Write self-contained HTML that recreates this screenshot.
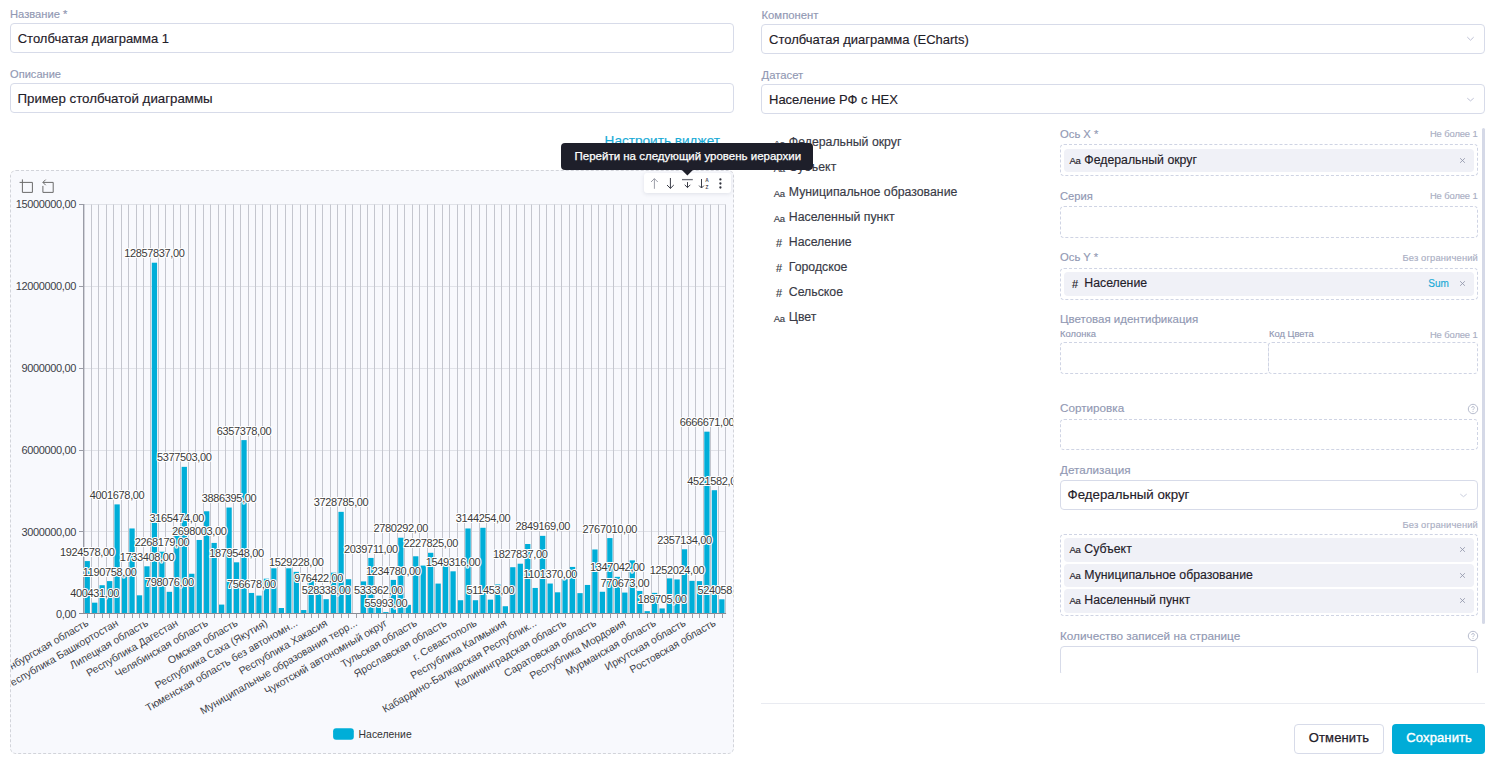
<!DOCTYPE html>
<html><head><meta charset="utf-8"><title>Widget editor</title>
<style>
html,body{margin:0;padding:0;background:#ffffff;width:1488px;height:757px;overflow:hidden;position:relative;font-family:"Liberation Sans", sans-serif;}
.t{position:absolute;white-space:nowrap;-webkit-text-stroke:0.15px currentColor;}
</style></head><body>
<div class="t" style="left:10.00px;top:9.00px;font-size:11.2px;line-height:11.2px;color:#9198b3;font-weight:400;">Название *</div>
<div style="position:absolute;left:10.00px;top:23.00px;width:724.00px;height:30.00px;box-sizing:border-box;border:1px solid #d7dbe9;border-radius:4px;background:#fff"></div>
<div class="t" style="left:17.70px;top:32.00px;font-size:13px;line-height:13px;color:#1f2029;font-weight:400;">Столбчатая диаграмма 1</div>
<div class="t" style="left:10.00px;top:69.00px;font-size:11.1px;line-height:11.1px;color:#9198b3;font-weight:400;">Описание</div>
<div style="position:absolute;left:10.00px;top:83.00px;width:724.00px;height:30.00px;box-sizing:border-box;border:1px solid #d7dbe9;border-radius:4px;background:#fff"></div>
<div class="t" style="left:17.50px;top:92.00px;font-size:13.3px;line-height:13.3px;color:#1f2029;font-weight:400;">Пример столбчатой диаграммы</div>
<div class="t" style="left:761.50px;top:10.00px;font-size:11.3px;line-height:11.3px;color:#9198b3;font-weight:400;">Компонент</div>
<div style="position:absolute;left:761.00px;top:24.00px;width:724.00px;height:30.00px;box-sizing:border-box;border:1px solid #d7dbe9;border-radius:4px;background:#fff"></div>
<div class="t" style="left:769.00px;top:33.00px;font-size:13px;line-height:13px;color:#1f2029;font-weight:400;">Столбчатая диаграмма (ECharts)</div>
<svg style="position:absolute;left:1465px;top:34px" width="11" height="9" viewBox="0 0 11 9"><path d="M2.30 3.10 L5.50 6.20 L8.70 3.10" fill="none" stroke="#b9bdd2" stroke-width="0.95"/></svg>
<div class="t" style="left:761.50px;top:70.00px;font-size:11.3px;line-height:11.3px;color:#9198b3;font-weight:400;">Датасет</div>
<div style="position:absolute;left:761.00px;top:84.00px;width:724.00px;height:30.00px;box-sizing:border-box;border:1px solid #d7dbe9;border-radius:4px;background:#fff"></div>
<div class="t" style="left:769.00px;top:93.00px;font-size:13px;line-height:13px;color:#1f2029;font-weight:400;">Население РФ с HEX</div>
<svg style="position:absolute;left:1465px;top:94px" width="11" height="9" viewBox="0 0 11 9"><path d="M2.30 4.20 L5.50 6.90 L8.70 4.20" fill="none" stroke="#b9bdd2" stroke-width="0.95"/></svg>
<div class="t" style="left:773.80px;top:139.00px;font-size:9.5px;line-height:9.5px;color:#3a3c48;font-weight:400;letter-spacing:-0.4px;">Aa</div>
<div class="t" style="left:788.80px;top:136.00px;font-size:12.3px;line-height:12.3px;color:#383a46;font-weight:400;">Федеральный округ</div>
<div class="t" style="left:773.80px;top:164.00px;font-size:9.5px;line-height:9.5px;color:#3a3c48;font-weight:400;letter-spacing:-0.4px;">Aa</div>
<div class="t" style="left:788.80px;top:161.00px;font-size:12.3px;line-height:12.3px;color:#383a46;font-weight:400;">Субъект</div>
<div class="t" style="left:773.80px;top:189.00px;font-size:9.5px;line-height:9.5px;color:#3a3c48;font-weight:400;letter-spacing:-0.4px;">Aa</div>
<div class="t" style="left:788.80px;top:186.00px;font-size:12.3px;line-height:12.3px;color:#383a46;font-weight:400;">Муниципальное образование</div>
<div class="t" style="left:773.80px;top:214.00px;font-size:9.5px;line-height:9.5px;color:#3a3c48;font-weight:400;letter-spacing:-0.4px;">Aa</div>
<div class="t" style="left:788.80px;top:211.00px;font-size:12.3px;line-height:12.3px;color:#383a46;font-weight:400;">Населенный пункт</div>
<div class="t" style="left:776.00px;top:238.00px;font-size:11px;line-height:11px;color:#3a3c48;font-weight:400;">#</div>
<div class="t" style="left:788.80px;top:236.00px;font-size:12.3px;line-height:12.3px;color:#383a46;font-weight:400;">Население</div>
<div class="t" style="left:776.00px;top:263.00px;font-size:11px;line-height:11px;color:#3a3c48;font-weight:400;">#</div>
<div class="t" style="left:788.80px;top:261.00px;font-size:12.3px;line-height:12.3px;color:#383a46;font-weight:400;">Городское</div>
<div class="t" style="left:776.00px;top:288.00px;font-size:11px;line-height:11px;color:#3a3c48;font-weight:400;">#</div>
<div class="t" style="left:788.80px;top:286.00px;font-size:12.3px;line-height:12.3px;color:#383a46;font-weight:400;">Сельское</div>
<div class="t" style="left:773.80px;top:314.00px;font-size:9.5px;line-height:9.5px;color:#3a3c48;font-weight:400;letter-spacing:-0.4px;">Aa</div>
<div class="t" style="left:788.80px;top:311.00px;font-size:12.3px;line-height:12.3px;color:#383a46;font-weight:400;">Цвет</div>
<div class="t" style="left:1060.00px;top:129.00px;font-size:11.25px;line-height:11.25px;color:#9198b3;font-weight:400;">Ось X *</div>
<div class="t" style="right:10.40px;top:129.00px;font-size:9.4px;line-height:9.4px;color:#a9aec3;font-weight:400;letter-spacing:-0.1px;">Не более 1</div>
<div style="position:absolute;left:1060.00px;top:144.00px;width:418.00px;height:32.00px;box-sizing:border-box;border:1px dashed #cfd4e4;border-radius:4px"></div>
<div style="position:absolute;left:1064.00px;top:149.00px;width:410.00px;height:23.00px;box-sizing:border-box;background:#f0f1f7;border-radius:4px"></div>
<div class="t" style="left:1069.60px;top:156.00px;font-size:9.5px;line-height:9.5px;color:#1f2029;font-weight:400;letter-spacing:-0.4px;">Aa</div>
<div class="t" style="left:1084.30px;top:154.00px;font-size:12.3px;line-height:12.3px;color:#1f2029;font-weight:400;">Федеральный округ</div>
<svg style="position:absolute;left:1458px;top:156px" width="9" height="9" viewBox="0 0 9 9"><path d="M2.10 2.20 L6.90 6.80 M6.90 2.20 L2.10 6.80" fill="none" stroke="#9297ab" stroke-width="0.85"/></svg>
<div class="t" style="left:1060.00px;top:191.00px;font-size:11.2px;line-height:11.2px;color:#9198b3;font-weight:400;">Серия</div>
<div class="t" style="right:10.40px;top:191.00px;font-size:9.4px;line-height:9.4px;color:#a9aec3;font-weight:400;letter-spacing:-0.1px;">Не более 1</div>
<div style="position:absolute;left:1060.00px;top:206.00px;width:418.00px;height:32.00px;box-sizing:border-box;border:1px dashed #cfd4e4;border-radius:4px"></div>
<div class="t" style="left:1060.00px;top:252.00px;font-size:11.25px;line-height:11.25px;color:#9198b3;font-weight:400;">Ось Y *</div>
<div class="t" style="right:10.00px;top:253.00px;font-size:9.4px;line-height:9.4px;color:#a9aec3;font-weight:400;letter-spacing:0.15px;">Без ограничений</div>
<div style="position:absolute;left:1060.00px;top:268.00px;width:418.00px;height:32.00px;box-sizing:border-box;border:1px dashed #cfd4e4;border-radius:4px"></div>
<div style="position:absolute;left:1064.00px;top:272.00px;width:410.00px;height:24.00px;box-sizing:border-box;background:#f0f1f7;border-radius:4px"></div>
<div class="t" style="left:1072.00px;top:279.00px;font-size:11px;line-height:11px;color:#1f2029;font-weight:400;">#</div>
<div class="t" style="left:1084.30px;top:277.00px;font-size:12.3px;line-height:12.3px;color:#1f2029;font-weight:400;">Население</div>
<div class="t" style="left:1428.30px;top:279.00px;font-size:10px;line-height:10px;color:#19aad6;font-weight:400;">Sum</div>
<svg style="position:absolute;left:1458px;top:279px" width="9" height="9" viewBox="0 0 9 9"><path d="M2.10 2.20 L6.90 6.80 M6.90 2.20 L2.10 6.80" fill="none" stroke="#9297ab" stroke-width="0.85"/></svg>
<div class="t" style="left:1060.00px;top:314.00px;font-size:11.5px;line-height:11.5px;color:#9198b3;font-weight:400;">Цветовая идентификация</div>
<div class="t" style="left:1060.00px;top:329.00px;font-size:9.4px;line-height:9.4px;color:#9198b3;font-weight:400;">Колонка</div>
<div class="t" style="left:1269.00px;top:329.00px;font-size:9.4px;line-height:9.4px;color:#9198b3;font-weight:400;">Код Цвета</div>
<div class="t" style="right:10.40px;top:330.00px;font-size:9.4px;line-height:9.4px;color:#a9aec3;font-weight:400;letter-spacing:-0.1px;">Не более 1</div>
<div style="position:absolute;left:1060.00px;top:342.00px;width:209.00px;height:32.00px;box-sizing:border-box;border:1px dashed #cfd4e4;border-radius:4px"></div>
<div style="position:absolute;left:1268.00px;top:342.00px;width:210.00px;height:32.00px;box-sizing:border-box;border:1px dashed #cfd4e4;border-radius:4px"></div>
<div class="t" style="left:1060.00px;top:402.00px;font-size:11.7px;line-height:11.7px;color:#9198b3;font-weight:400;">Сортировка</div>
<svg style="position:absolute;left:1466.80px;top:403.00px" width="12" height="12" viewBox="0 0 12 12"><circle cx="6" cy="6" r="4.7" fill="none" stroke="#b7bccd" stroke-width="1"/><path d="M4.6 4.9 C4.6 4.0 5.2 3.5 6 3.5 C6.8 3.5 7.4 4.0 7.4 4.8 C7.4 5.5 6.9 5.8 6.5 6.1 C6.1 6.4 6 6.7 6 7.1" fill="none" stroke="#b7bccd" stroke-width="0.9"/><circle cx="6" cy="8.5" r="0.55" fill="#b7bccd"/></svg>
<div style="position:absolute;left:1060.00px;top:419.00px;width:418.00px;height:31.00px;box-sizing:border-box;border:1px dashed #cfd4e4;border-radius:4px"></div>
<div class="t" style="left:1060.00px;top:464.00px;font-size:11.7px;line-height:11.7px;color:#9198b3;font-weight:400;">Детализация</div>
<div style="position:absolute;left:1060.00px;top:480.00px;width:418.00px;height:30.00px;box-sizing:border-box;border:1px solid #d7dbe9;border-radius:4px;background:#fff"></div>
<div class="t" style="left:1067.60px;top:488.00px;font-size:13.3px;line-height:13.3px;color:#1f2029;font-weight:400;">Федеральный округ</div>
<svg style="position:absolute;left:1458px;top:490px" width="11" height="9" viewBox="0 0 11 9"><path d="M2.30 4.10 L5.50 6.70 L8.70 4.10" fill="none" stroke="#c6cadb" stroke-width="0.95"/></svg>
<div class="t" style="right:10.00px;top:520.00px;font-size:9.4px;line-height:9.4px;color:#a9aec3;font-weight:400;letter-spacing:0.15px;">Без ограничений</div>
<div style="position:absolute;left:1060.00px;top:534.00px;width:418.00px;height:82.00px;box-sizing:border-box;border:1px dashed #cfd4e4;border-radius:4px"></div>
<div style="position:absolute;left:1064.00px;top:538.00px;width:410.00px;height:23.50px;box-sizing:border-box;background:#f0f1f7;border-radius:4px"></div>
<div class="t" style="left:1069.60px;top:545.00px;font-size:9.5px;line-height:9.5px;color:#1f2029;font-weight:400;letter-spacing:-0.4px;">Aa</div>
<div class="t" style="left:1084.30px;top:543.00px;font-size:12.3px;line-height:12.3px;color:#1f2029;font-weight:400;">Субъект</div>
<svg style="position:absolute;left:1458px;top:545px" width="9" height="9" viewBox="0 0 9 9"><path d="M2.10 2.20 L6.90 6.80 M6.90 2.20 L2.10 6.80" fill="none" stroke="#9297ab" stroke-width="0.85"/></svg>
<div style="position:absolute;left:1064.00px;top:563.60px;width:410.00px;height:23.50px;box-sizing:border-box;background:#f0f1f7;border-radius:4px"></div>
<div class="t" style="left:1069.60px;top:571.00px;font-size:9.5px;line-height:9.5px;color:#1f2029;font-weight:400;letter-spacing:-0.4px;">Aa</div>
<div class="t" style="left:1084.30px;top:569.00px;font-size:12.3px;line-height:12.3px;color:#1f2029;font-weight:400;">Муниципальное образование</div>
<svg style="position:absolute;left:1458px;top:571px" width="9" height="9" viewBox="0 0 9 9"><path d="M2.10 2.20 L6.90 6.80 M6.90 2.20 L2.10 6.80" fill="none" stroke="#9297ab" stroke-width="0.85"/></svg>
<div style="position:absolute;left:1064.00px;top:589.20px;width:410.00px;height:23.50px;box-sizing:border-box;background:#f0f1f7;border-radius:4px"></div>
<div class="t" style="left:1069.60px;top:596.00px;font-size:9.5px;line-height:9.5px;color:#1f2029;font-weight:400;letter-spacing:-0.4px;">Aa</div>
<div class="t" style="left:1084.30px;top:594.00px;font-size:12.3px;line-height:12.3px;color:#1f2029;font-weight:400;">Населенный пункт</div>
<svg style="position:absolute;left:1458px;top:596px" width="9" height="9" viewBox="0 0 9 9"><path d="M2.10 2.20 L6.90 6.80 M6.90 2.20 L2.10 6.80" fill="none" stroke="#9297ab" stroke-width="0.85"/></svg>
<div class="t" style="left:1060.00px;top:630.00px;font-size:11.75px;line-height:11.75px;color:#9198b3;font-weight:400;">Количество записей на странице</div>
<svg style="position:absolute;left:1467.00px;top:629.80px" width="12" height="12" viewBox="0 0 12 12"><circle cx="6" cy="6" r="4.7" fill="none" stroke="#b7bccd" stroke-width="1"/><path d="M4.6 4.9 C4.6 4.0 5.2 3.5 6 3.5 C6.8 3.5 7.4 4.0 7.4 4.8 C7.4 5.5 6.9 5.8 6.5 6.1 C6.1 6.4 6 6.7 6 7.1" fill="none" stroke="#b7bccd" stroke-width="0.9"/><circle cx="6" cy="8.5" r="0.55" fill="#b7bccd"/></svg>
<div style="position:absolute;left:1040px;top:600px;width:440px;height:73px;overflow:hidden"><div style="position:absolute;left:20px;top:46px;width:418px;height:30px;box-sizing:border-box;border:1px solid #d7dbe9;border-radius:4px;background:#fff"></div></div>
<div style="position:absolute;left:1482.00px;top:128.00px;width:3.00px;height:496.00px;box-sizing:border-box;background:#d5d9e7;border-radius:2px"></div>
<div style="position:absolute;left:761.00px;top:703.00px;width:724.00px;height:1.00px;box-sizing:border-box;background:#e9ebf1"></div>
<div style="position:absolute;left:1294.00px;top:724.00px;width:90.00px;height:30.00px;box-sizing:border-box;border:1px solid #d7dbe9;border-radius:4px;background:#fff"></div>
<div class="t" style="left:1308.70px;top:731.00px;font-size:13px;line-height:13px;color:#1f2029;font-weight:400;letter-spacing:0.15px;-webkit-text-stroke:0.25px #1f2029;">Отменить</div>
<div style="position:absolute;left:1392.00px;top:724.00px;width:93.00px;height:30.00px;box-sizing:border-box;background:#00acd7;border-radius:4px"></div>
<div class="t" style="left:1406.30px;top:731.00px;font-size:13px;line-height:13px;color:#ffffff;font-weight:400;letter-spacing:0.12px;-webkit-text-stroke:0.4px #ffffff;">Сохранить</div>
<div style="position:absolute;left:10.00px;top:170.00px;width:724.00px;height:584.00px;box-sizing:border-box;border:1px dashed #d2d4da;border-radius:6px;background:#f8f9fd"></div>
<svg style="position:absolute;left:0;top:0" width="1488" height="757" viewBox="0 0 1488 757">
<defs><clipPath id="cc"><rect x="11" y="171" width="722" height="582"/></clipPath></defs>
<g clip-path="url(#cc)">
<line x1="83.5" y1="531.50" x2="725.6" y2="531.50" stroke="#e0e2e8" stroke-width="1"/>
<line x1="79.0" y1="531.50" x2="83.5" y2="531.50" stroke="#9a9ca6" stroke-width="1"/>
<line x1="83.5" y1="450.50" x2="725.6" y2="450.50" stroke="#e0e2e8" stroke-width="1"/>
<line x1="79.0" y1="450.50" x2="83.5" y2="450.50" stroke="#9a9ca6" stroke-width="1"/>
<line x1="83.5" y1="368.50" x2="725.6" y2="368.50" stroke="#e0e2e8" stroke-width="1"/>
<line x1="79.0" y1="368.50" x2="83.5" y2="368.50" stroke="#9a9ca6" stroke-width="1"/>
<line x1="83.5" y1="286.50" x2="725.6" y2="286.50" stroke="#e0e2e8" stroke-width="1"/>
<line x1="79.0" y1="286.50" x2="83.5" y2="286.50" stroke="#9a9ca6" stroke-width="1"/>
<line x1="83.5" y1="204.50" x2="725.6" y2="204.50" stroke="#e0e2e8" stroke-width="1"/>
<line x1="79.0" y1="204.50" x2="83.5" y2="204.50" stroke="#9a9ca6" stroke-width="1"/>
<line x1="91.50" y1="204.5" x2="91.50" y2="613.6" stroke="#c4c6ce" stroke-width="1"/>
<line x1="98.50" y1="204.5" x2="98.50" y2="613.6" stroke="#c4c6ce" stroke-width="1"/>
<line x1="106.50" y1="204.5" x2="106.50" y2="613.6" stroke="#c4c6ce" stroke-width="1"/>
<line x1="113.50" y1="204.5" x2="113.50" y2="613.6" stroke="#c4c6ce" stroke-width="1"/>
<line x1="121.50" y1="204.5" x2="121.50" y2="613.6" stroke="#c4c6ce" stroke-width="1"/>
<line x1="128.50" y1="204.5" x2="128.50" y2="613.6" stroke="#c4c6ce" stroke-width="1"/>
<line x1="136.50" y1="204.5" x2="136.50" y2="613.6" stroke="#c4c6ce" stroke-width="1"/>
<line x1="143.50" y1="204.5" x2="143.50" y2="613.6" stroke="#c4c6ce" stroke-width="1"/>
<line x1="150.50" y1="204.5" x2="150.50" y2="613.6" stroke="#c4c6ce" stroke-width="1"/>
<line x1="158.50" y1="204.5" x2="158.50" y2="613.6" stroke="#c4c6ce" stroke-width="1"/>
<line x1="165.50" y1="204.5" x2="165.50" y2="613.6" stroke="#c4c6ce" stroke-width="1"/>
<line x1="173.50" y1="204.5" x2="173.50" y2="613.6" stroke="#c4c6ce" stroke-width="1"/>
<line x1="180.50" y1="204.5" x2="180.50" y2="613.6" stroke="#c4c6ce" stroke-width="1"/>
<line x1="188.50" y1="204.5" x2="188.50" y2="613.6" stroke="#c4c6ce" stroke-width="1"/>
<line x1="195.50" y1="204.5" x2="195.50" y2="613.6" stroke="#c4c6ce" stroke-width="1"/>
<line x1="203.50" y1="204.5" x2="203.50" y2="613.6" stroke="#c4c6ce" stroke-width="1"/>
<line x1="210.50" y1="204.5" x2="210.50" y2="613.6" stroke="#c4c6ce" stroke-width="1"/>
<line x1="218.50" y1="204.5" x2="218.50" y2="613.6" stroke="#c4c6ce" stroke-width="1"/>
<line x1="225.50" y1="204.5" x2="225.50" y2="613.6" stroke="#c4c6ce" stroke-width="1"/>
<line x1="233.50" y1="204.5" x2="233.50" y2="613.6" stroke="#c4c6ce" stroke-width="1"/>
<line x1="240.50" y1="204.5" x2="240.50" y2="613.6" stroke="#c4c6ce" stroke-width="1"/>
<line x1="248.50" y1="204.5" x2="248.50" y2="613.6" stroke="#c4c6ce" stroke-width="1"/>
<line x1="255.50" y1="204.5" x2="255.50" y2="613.6" stroke="#c4c6ce" stroke-width="1"/>
<line x1="262.50" y1="204.5" x2="262.50" y2="613.6" stroke="#c4c6ce" stroke-width="1"/>
<line x1="270.50" y1="204.5" x2="270.50" y2="613.6" stroke="#c4c6ce" stroke-width="1"/>
<line x1="277.50" y1="204.5" x2="277.50" y2="613.6" stroke="#c4c6ce" stroke-width="1"/>
<line x1="285.50" y1="204.5" x2="285.50" y2="613.6" stroke="#c4c6ce" stroke-width="1"/>
<line x1="292.50" y1="204.5" x2="292.50" y2="613.6" stroke="#c4c6ce" stroke-width="1"/>
<line x1="300.50" y1="204.5" x2="300.50" y2="613.6" stroke="#c4c6ce" stroke-width="1"/>
<line x1="307.50" y1="204.5" x2="307.50" y2="613.6" stroke="#c4c6ce" stroke-width="1"/>
<line x1="315.50" y1="204.5" x2="315.50" y2="613.6" stroke="#c4c6ce" stroke-width="1"/>
<line x1="322.50" y1="204.5" x2="322.50" y2="613.6" stroke="#c4c6ce" stroke-width="1"/>
<line x1="330.50" y1="204.5" x2="330.50" y2="613.6" stroke="#c4c6ce" stroke-width="1"/>
<line x1="337.50" y1="204.5" x2="337.50" y2="613.6" stroke="#c4c6ce" stroke-width="1"/>
<line x1="345.50" y1="204.5" x2="345.50" y2="613.6" stroke="#c4c6ce" stroke-width="1"/>
<line x1="352.50" y1="204.5" x2="352.50" y2="613.6" stroke="#c4c6ce" stroke-width="1"/>
<line x1="360.50" y1="204.5" x2="360.50" y2="613.6" stroke="#c4c6ce" stroke-width="1"/>
<line x1="367.50" y1="204.5" x2="367.50" y2="613.6" stroke="#c4c6ce" stroke-width="1"/>
<line x1="374.50" y1="204.5" x2="374.50" y2="613.6" stroke="#c4c6ce" stroke-width="1"/>
<line x1="382.50" y1="204.5" x2="382.50" y2="613.6" stroke="#c4c6ce" stroke-width="1"/>
<line x1="389.50" y1="204.5" x2="389.50" y2="613.6" stroke="#c4c6ce" stroke-width="1"/>
<line x1="397.50" y1="204.5" x2="397.50" y2="613.6" stroke="#c4c6ce" stroke-width="1"/>
<line x1="404.50" y1="204.5" x2="404.50" y2="613.6" stroke="#c4c6ce" stroke-width="1"/>
<line x1="412.50" y1="204.5" x2="412.50" y2="613.6" stroke="#c4c6ce" stroke-width="1"/>
<line x1="419.50" y1="204.5" x2="419.50" y2="613.6" stroke="#c4c6ce" stroke-width="1"/>
<line x1="427.50" y1="204.5" x2="427.50" y2="613.6" stroke="#c4c6ce" stroke-width="1"/>
<line x1="434.50" y1="204.5" x2="434.50" y2="613.6" stroke="#c4c6ce" stroke-width="1"/>
<line x1="442.50" y1="204.5" x2="442.50" y2="613.6" stroke="#c4c6ce" stroke-width="1"/>
<line x1="449.50" y1="204.5" x2="449.50" y2="613.6" stroke="#c4c6ce" stroke-width="1"/>
<line x1="457.50" y1="204.5" x2="457.50" y2="613.6" stroke="#c4c6ce" stroke-width="1"/>
<line x1="464.50" y1="204.5" x2="464.50" y2="613.6" stroke="#c4c6ce" stroke-width="1"/>
<line x1="471.50" y1="204.5" x2="471.50" y2="613.6" stroke="#c4c6ce" stroke-width="1"/>
<line x1="479.50" y1="204.5" x2="479.50" y2="613.6" stroke="#c4c6ce" stroke-width="1"/>
<line x1="486.50" y1="204.5" x2="486.50" y2="613.6" stroke="#c4c6ce" stroke-width="1"/>
<line x1="494.50" y1="204.5" x2="494.50" y2="613.6" stroke="#c4c6ce" stroke-width="1"/>
<line x1="501.50" y1="204.5" x2="501.50" y2="613.6" stroke="#c4c6ce" stroke-width="1"/>
<line x1="509.50" y1="204.5" x2="509.50" y2="613.6" stroke="#c4c6ce" stroke-width="1"/>
<line x1="516.50" y1="204.5" x2="516.50" y2="613.6" stroke="#c4c6ce" stroke-width="1"/>
<line x1="524.50" y1="204.5" x2="524.50" y2="613.6" stroke="#c4c6ce" stroke-width="1"/>
<line x1="531.50" y1="204.5" x2="531.50" y2="613.6" stroke="#c4c6ce" stroke-width="1"/>
<line x1="539.50" y1="204.5" x2="539.50" y2="613.6" stroke="#c4c6ce" stroke-width="1"/>
<line x1="546.50" y1="204.5" x2="546.50" y2="613.6" stroke="#c4c6ce" stroke-width="1"/>
<line x1="554.50" y1="204.5" x2="554.50" y2="613.6" stroke="#c4c6ce" stroke-width="1"/>
<line x1="561.50" y1="204.5" x2="561.50" y2="613.6" stroke="#c4c6ce" stroke-width="1"/>
<line x1="569.50" y1="204.5" x2="569.50" y2="613.6" stroke="#c4c6ce" stroke-width="1"/>
<line x1="576.50" y1="204.5" x2="576.50" y2="613.6" stroke="#c4c6ce" stroke-width="1"/>
<line x1="583.50" y1="204.5" x2="583.50" y2="613.6" stroke="#c4c6ce" stroke-width="1"/>
<line x1="591.50" y1="204.5" x2="591.50" y2="613.6" stroke="#c4c6ce" stroke-width="1"/>
<line x1="598.50" y1="204.5" x2="598.50" y2="613.6" stroke="#c4c6ce" stroke-width="1"/>
<line x1="606.50" y1="204.5" x2="606.50" y2="613.6" stroke="#c4c6ce" stroke-width="1"/>
<line x1="613.50" y1="204.5" x2="613.50" y2="613.6" stroke="#c4c6ce" stroke-width="1"/>
<line x1="621.50" y1="204.5" x2="621.50" y2="613.6" stroke="#c4c6ce" stroke-width="1"/>
<line x1="628.50" y1="204.5" x2="628.50" y2="613.6" stroke="#c4c6ce" stroke-width="1"/>
<line x1="636.50" y1="204.5" x2="636.50" y2="613.6" stroke="#c4c6ce" stroke-width="1"/>
<line x1="643.50" y1="204.5" x2="643.50" y2="613.6" stroke="#c4c6ce" stroke-width="1"/>
<line x1="651.50" y1="204.5" x2="651.50" y2="613.6" stroke="#c4c6ce" stroke-width="1"/>
<line x1="658.50" y1="204.5" x2="658.50" y2="613.6" stroke="#c4c6ce" stroke-width="1"/>
<line x1="666.50" y1="204.5" x2="666.50" y2="613.6" stroke="#c4c6ce" stroke-width="1"/>
<line x1="673.50" y1="204.5" x2="673.50" y2="613.6" stroke="#c4c6ce" stroke-width="1"/>
<line x1="681.50" y1="204.5" x2="681.50" y2="613.6" stroke="#c4c6ce" stroke-width="1"/>
<line x1="688.50" y1="204.5" x2="688.50" y2="613.6" stroke="#c4c6ce" stroke-width="1"/>
<line x1="695.50" y1="204.5" x2="695.50" y2="613.6" stroke="#c4c6ce" stroke-width="1"/>
<line x1="703.50" y1="204.5" x2="703.50" y2="613.6" stroke="#c4c6ce" stroke-width="1"/>
<line x1="710.50" y1="204.5" x2="710.50" y2="613.6" stroke="#c4c6ce" stroke-width="1"/>
<line x1="718.50" y1="204.5" x2="718.50" y2="613.6" stroke="#c4c6ce" stroke-width="1"/>
<line x1="725.50" y1="204.5" x2="725.50" y2="613.6" stroke="#c4c6ce" stroke-width="1"/>
<rect x="84.58" y="561.08" width="5.30" height="52.52" fill="#00aed8"/>
<rect x="92.05" y="602.67" width="5.30" height="10.93" fill="#00aed8"/>
<rect x="99.52" y="585.22" width="5.30" height="28.38" fill="#00aed8"/>
<rect x="106.98" y="581.10" width="5.30" height="32.50" fill="#00aed8"/>
<rect x="114.45" y="504.39" width="5.30" height="109.21" fill="#00aed8"/>
<rect x="121.91" y="574.03" width="5.30" height="39.57" fill="#00aed8"/>
<rect x="129.38" y="528.46" width="5.30" height="85.14" fill="#00aed8"/>
<rect x="136.85" y="595.32" width="5.30" height="18.28" fill="#00aed8"/>
<rect x="144.31" y="566.30" width="5.30" height="47.30" fill="#00aed8"/>
<rect x="151.78" y="262.71" width="5.30" height="350.89" fill="#00aed8"/>
<rect x="159.25" y="551.70" width="5.30" height="61.90" fill="#00aed8"/>
<rect x="166.71" y="591.82" width="5.30" height="21.78" fill="#00aed8"/>
<rect x="174.18" y="527.21" width="5.30" height="86.39" fill="#00aed8"/>
<rect x="181.64" y="466.85" width="5.30" height="146.75" fill="#00aed8"/>
<rect x="189.11" y="573.76" width="5.30" height="39.84" fill="#00aed8"/>
<rect x="196.58" y="539.97" width="5.30" height="73.63" fill="#00aed8"/>
<rect x="204.04" y="511.26" width="5.30" height="102.34" fill="#00aed8"/>
<rect x="211.51" y="542.92" width="5.30" height="70.68" fill="#00aed8"/>
<rect x="218.98" y="604.59" width="5.30" height="9.01" fill="#00aed8"/>
<rect x="226.44" y="507.54" width="5.30" height="106.06" fill="#00aed8"/>
<rect x="233.91" y="562.31" width="5.30" height="51.29" fill="#00aed8"/>
<rect x="241.37" y="440.11" width="5.30" height="173.49" fill="#00aed8"/>
<rect x="248.84" y="592.95" width="5.30" height="20.65" fill="#00aed8"/>
<rect x="256.31" y="595.59" width="5.30" height="18.01" fill="#00aed8"/>
<rect x="263.77" y="578.67" width="5.30" height="34.93" fill="#00aed8"/>
<rect x="271.24" y="568.30" width="5.30" height="45.30" fill="#00aed8"/>
<rect x="278.71" y="608.01" width="5.30" height="5.59" fill="#00aed8"/>
<rect x="286.17" y="568.30" width="5.30" height="45.30" fill="#00aed8"/>
<rect x="293.64" y="571.87" width="5.30" height="41.73" fill="#00aed8"/>
<rect x="301.10" y="610.05" width="5.30" height="3.55" fill="#00aed8"/>
<rect x="308.57" y="581.12" width="5.30" height="32.48" fill="#00aed8"/>
<rect x="316.04" y="586.95" width="5.30" height="26.65" fill="#00aed8"/>
<rect x="323.50" y="599.18" width="5.30" height="14.42" fill="#00aed8"/>
<rect x="330.97" y="572.66" width="5.30" height="40.94" fill="#00aed8"/>
<rect x="338.44" y="511.84" width="5.30" height="101.76" fill="#00aed8"/>
<rect x="345.90" y="579.21" width="5.30" height="34.39" fill="#00aed8"/>
<rect x="353.37" y="613.33" width="5.30" height="0.27" fill="#00aed8"/>
<rect x="360.83" y="581.40" width="5.30" height="32.20" fill="#00aed8"/>
<rect x="368.30" y="557.94" width="5.30" height="55.66" fill="#00aed8"/>
<rect x="375.77" y="599.04" width="5.30" height="14.56" fill="#00aed8"/>
<rect x="383.23" y="612.07" width="5.30" height="1.53" fill="#00aed8"/>
<rect x="390.70" y="579.90" width="5.30" height="33.70" fill="#00aed8"/>
<rect x="398.17" y="537.73" width="5.30" height="75.87" fill="#00aed8"/>
<rect x="405.63" y="604.87" width="5.30" height="8.73" fill="#00aed8"/>
<rect x="413.10" y="556.29" width="5.30" height="57.31" fill="#00aed8"/>
<rect x="420.57" y="565.57" width="5.30" height="48.03" fill="#00aed8"/>
<rect x="428.03" y="552.80" width="5.30" height="60.80" fill="#00aed8"/>
<rect x="435.50" y="583.58" width="5.30" height="30.02" fill="#00aed8"/>
<rect x="442.96" y="563.11" width="5.30" height="50.49" fill="#00aed8"/>
<rect x="450.43" y="571.32" width="5.30" height="42.28" fill="#00aed8"/>
<rect x="457.90" y="600.23" width="5.30" height="13.37" fill="#00aed8"/>
<rect x="465.36" y="528.46" width="5.30" height="85.14" fill="#00aed8"/>
<rect x="472.83" y="600.23" width="5.30" height="13.37" fill="#00aed8"/>
<rect x="480.30" y="527.79" width="5.30" height="85.81" fill="#00aed8"/>
<rect x="487.76" y="599.64" width="5.30" height="13.96" fill="#00aed8"/>
<rect x="495.23" y="584.40" width="5.30" height="29.20" fill="#00aed8"/>
<rect x="502.69" y="606.23" width="5.30" height="7.37" fill="#00aed8"/>
<rect x="510.16" y="567.21" width="5.30" height="46.39" fill="#00aed8"/>
<rect x="517.63" y="563.72" width="5.30" height="49.88" fill="#00aed8"/>
<rect x="525.09" y="544.01" width="5.30" height="69.59" fill="#00aed8"/>
<rect x="532.56" y="587.95" width="5.30" height="25.65" fill="#00aed8"/>
<rect x="540.03" y="535.85" width="5.30" height="77.75" fill="#00aed8"/>
<rect x="547.49" y="583.54" width="5.30" height="30.06" fill="#00aed8"/>
<rect x="554.96" y="592.31" width="5.30" height="21.29" fill="#00aed8"/>
<rect x="562.42" y="579.21" width="5.30" height="34.39" fill="#00aed8"/>
<rect x="569.89" y="566.93" width="5.30" height="46.67" fill="#00aed8"/>
<rect x="577.36" y="593.13" width="5.30" height="20.47" fill="#00aed8"/>
<rect x="584.82" y="584.95" width="5.30" height="28.65" fill="#00aed8"/>
<rect x="592.29" y="549.47" width="5.30" height="64.13" fill="#00aed8"/>
<rect x="599.76" y="591.77" width="5.30" height="21.83" fill="#00aed8"/>
<rect x="607.22" y="538.09" width="5.30" height="75.51" fill="#00aed8"/>
<rect x="614.69" y="576.84" width="5.30" height="36.76" fill="#00aed8"/>
<rect x="622.15" y="592.57" width="5.30" height="21.03" fill="#00aed8"/>
<rect x="629.62" y="560.38" width="5.30" height="53.22" fill="#00aed8"/>
<rect x="637.09" y="590.95" width="5.30" height="22.65" fill="#00aed8"/>
<rect x="644.55" y="611.14" width="5.30" height="2.46" fill="#00aed8"/>
<rect x="652.02" y="592.86" width="5.30" height="20.74" fill="#00aed8"/>
<rect x="659.49" y="608.42" width="5.30" height="5.18" fill="#00aed8"/>
<rect x="666.95" y="578.40" width="5.30" height="35.20" fill="#00aed8"/>
<rect x="674.42" y="579.43" width="5.30" height="34.17" fill="#00aed8"/>
<rect x="681.88" y="549.27" width="5.30" height="64.33" fill="#00aed8"/>
<rect x="689.35" y="580.85" width="5.30" height="32.75" fill="#00aed8"/>
<rect x="696.82" y="581.12" width="5.30" height="32.48" fill="#00aed8"/>
<rect x="704.28" y="431.67" width="5.30" height="181.93" fill="#00aed8"/>
<rect x="711.75" y="490.21" width="5.30" height="123.39" fill="#00aed8"/>
<rect x="719.22" y="599.30" width="5.30" height="14.30" fill="#00aed8"/>
<line x1="83.7" y1="204" x2="83.7" y2="613.5" stroke="#9a9ca6" stroke-width="1.4"/>
<line x1="79.0" y1="613.5" x2="726.1" y2="613.5" stroke="#8a8c95" stroke-width="1"/>
<line x1="87.50" y1="613.6" x2="87.50" y2="618.0" stroke="#9c9ea7" stroke-width="1"/>
<line x1="94.50" y1="613.6" x2="94.50" y2="618.0" stroke="#9c9ea7" stroke-width="1"/>
<line x1="102.50" y1="613.6" x2="102.50" y2="618.0" stroke="#9c9ea7" stroke-width="1"/>
<line x1="109.50" y1="613.6" x2="109.50" y2="618.0" stroke="#9c9ea7" stroke-width="1"/>
<line x1="117.50" y1="613.6" x2="117.50" y2="618.0" stroke="#9c9ea7" stroke-width="1"/>
<line x1="124.50" y1="613.6" x2="124.50" y2="618.0" stroke="#9c9ea7" stroke-width="1"/>
<line x1="132.50" y1="613.6" x2="132.50" y2="618.0" stroke="#9c9ea7" stroke-width="1"/>
<line x1="139.50" y1="613.6" x2="139.50" y2="618.0" stroke="#9c9ea7" stroke-width="1"/>
<line x1="147.50" y1="613.6" x2="147.50" y2="618.0" stroke="#9c9ea7" stroke-width="1"/>
<line x1="154.50" y1="613.6" x2="154.50" y2="618.0" stroke="#9c9ea7" stroke-width="1"/>
<line x1="162.50" y1="613.6" x2="162.50" y2="618.0" stroke="#9c9ea7" stroke-width="1"/>
<line x1="169.50" y1="613.6" x2="169.50" y2="618.0" stroke="#9c9ea7" stroke-width="1"/>
<line x1="177.50" y1="613.6" x2="177.50" y2="618.0" stroke="#9c9ea7" stroke-width="1"/>
<line x1="184.50" y1="613.6" x2="184.50" y2="618.0" stroke="#9c9ea7" stroke-width="1"/>
<line x1="192.50" y1="613.6" x2="192.50" y2="618.0" stroke="#9c9ea7" stroke-width="1"/>
<line x1="199.50" y1="613.6" x2="199.50" y2="618.0" stroke="#9c9ea7" stroke-width="1"/>
<line x1="206.50" y1="613.6" x2="206.50" y2="618.0" stroke="#9c9ea7" stroke-width="1"/>
<line x1="214.50" y1="613.6" x2="214.50" y2="618.0" stroke="#9c9ea7" stroke-width="1"/>
<line x1="221.50" y1="613.6" x2="221.50" y2="618.0" stroke="#9c9ea7" stroke-width="1"/>
<line x1="229.50" y1="613.6" x2="229.50" y2="618.0" stroke="#9c9ea7" stroke-width="1"/>
<line x1="236.50" y1="613.6" x2="236.50" y2="618.0" stroke="#9c9ea7" stroke-width="1"/>
<line x1="244.50" y1="613.6" x2="244.50" y2="618.0" stroke="#9c9ea7" stroke-width="1"/>
<line x1="251.50" y1="613.6" x2="251.50" y2="618.0" stroke="#9c9ea7" stroke-width="1"/>
<line x1="259.50" y1="613.6" x2="259.50" y2="618.0" stroke="#9c9ea7" stroke-width="1"/>
<line x1="266.50" y1="613.6" x2="266.50" y2="618.0" stroke="#9c9ea7" stroke-width="1"/>
<line x1="274.50" y1="613.6" x2="274.50" y2="618.0" stroke="#9c9ea7" stroke-width="1"/>
<line x1="281.50" y1="613.6" x2="281.50" y2="618.0" stroke="#9c9ea7" stroke-width="1"/>
<line x1="289.50" y1="613.6" x2="289.50" y2="618.0" stroke="#9c9ea7" stroke-width="1"/>
<line x1="296.50" y1="613.6" x2="296.50" y2="618.0" stroke="#9c9ea7" stroke-width="1"/>
<line x1="304.50" y1="613.6" x2="304.50" y2="618.0" stroke="#9c9ea7" stroke-width="1"/>
<line x1="311.50" y1="613.6" x2="311.50" y2="618.0" stroke="#9c9ea7" stroke-width="1"/>
<line x1="318.50" y1="613.6" x2="318.50" y2="618.0" stroke="#9c9ea7" stroke-width="1"/>
<line x1="326.50" y1="613.6" x2="326.50" y2="618.0" stroke="#9c9ea7" stroke-width="1"/>
<line x1="333.50" y1="613.6" x2="333.50" y2="618.0" stroke="#9c9ea7" stroke-width="1"/>
<line x1="341.50" y1="613.6" x2="341.50" y2="618.0" stroke="#9c9ea7" stroke-width="1"/>
<line x1="348.50" y1="613.6" x2="348.50" y2="618.0" stroke="#9c9ea7" stroke-width="1"/>
<line x1="356.50" y1="613.6" x2="356.50" y2="618.0" stroke="#9c9ea7" stroke-width="1"/>
<line x1="363.50" y1="613.6" x2="363.50" y2="618.0" stroke="#9c9ea7" stroke-width="1"/>
<line x1="371.50" y1="613.6" x2="371.50" y2="618.0" stroke="#9c9ea7" stroke-width="1"/>
<line x1="378.50" y1="613.6" x2="378.50" y2="618.0" stroke="#9c9ea7" stroke-width="1"/>
<line x1="386.50" y1="613.6" x2="386.50" y2="618.0" stroke="#9c9ea7" stroke-width="1"/>
<line x1="393.50" y1="613.6" x2="393.50" y2="618.0" stroke="#9c9ea7" stroke-width="1"/>
<line x1="401.50" y1="613.6" x2="401.50" y2="618.0" stroke="#9c9ea7" stroke-width="1"/>
<line x1="408.50" y1="613.6" x2="408.50" y2="618.0" stroke="#9c9ea7" stroke-width="1"/>
<line x1="415.50" y1="613.6" x2="415.50" y2="618.0" stroke="#9c9ea7" stroke-width="1"/>
<line x1="423.50" y1="613.6" x2="423.50" y2="618.0" stroke="#9c9ea7" stroke-width="1"/>
<line x1="430.50" y1="613.6" x2="430.50" y2="618.0" stroke="#9c9ea7" stroke-width="1"/>
<line x1="438.50" y1="613.6" x2="438.50" y2="618.0" stroke="#9c9ea7" stroke-width="1"/>
<line x1="445.50" y1="613.6" x2="445.50" y2="618.0" stroke="#9c9ea7" stroke-width="1"/>
<line x1="453.50" y1="613.6" x2="453.50" y2="618.0" stroke="#9c9ea7" stroke-width="1"/>
<line x1="460.50" y1="613.6" x2="460.50" y2="618.0" stroke="#9c9ea7" stroke-width="1"/>
<line x1="468.50" y1="613.6" x2="468.50" y2="618.0" stroke="#9c9ea7" stroke-width="1"/>
<line x1="475.50" y1="613.6" x2="475.50" y2="618.0" stroke="#9c9ea7" stroke-width="1"/>
<line x1="483.50" y1="613.6" x2="483.50" y2="618.0" stroke="#9c9ea7" stroke-width="1"/>
<line x1="490.50" y1="613.6" x2="490.50" y2="618.0" stroke="#9c9ea7" stroke-width="1"/>
<line x1="498.50" y1="613.6" x2="498.50" y2="618.0" stroke="#9c9ea7" stroke-width="1"/>
<line x1="505.50" y1="613.6" x2="505.50" y2="618.0" stroke="#9c9ea7" stroke-width="1"/>
<line x1="513.50" y1="613.6" x2="513.50" y2="618.0" stroke="#9c9ea7" stroke-width="1"/>
<line x1="520.50" y1="613.6" x2="520.50" y2="618.0" stroke="#9c9ea7" stroke-width="1"/>
<line x1="527.50" y1="613.6" x2="527.50" y2="618.0" stroke="#9c9ea7" stroke-width="1"/>
<line x1="535.50" y1="613.6" x2="535.50" y2="618.0" stroke="#9c9ea7" stroke-width="1"/>
<line x1="542.50" y1="613.6" x2="542.50" y2="618.0" stroke="#9c9ea7" stroke-width="1"/>
<line x1="550.50" y1="613.6" x2="550.50" y2="618.0" stroke="#9c9ea7" stroke-width="1"/>
<line x1="557.50" y1="613.6" x2="557.50" y2="618.0" stroke="#9c9ea7" stroke-width="1"/>
<line x1="565.50" y1="613.6" x2="565.50" y2="618.0" stroke="#9c9ea7" stroke-width="1"/>
<line x1="572.50" y1="613.6" x2="572.50" y2="618.0" stroke="#9c9ea7" stroke-width="1"/>
<line x1="580.50" y1="613.6" x2="580.50" y2="618.0" stroke="#9c9ea7" stroke-width="1"/>
<line x1="587.50" y1="613.6" x2="587.50" y2="618.0" stroke="#9c9ea7" stroke-width="1"/>
<line x1="595.50" y1="613.6" x2="595.50" y2="618.0" stroke="#9c9ea7" stroke-width="1"/>
<line x1="602.50" y1="613.6" x2="602.50" y2="618.0" stroke="#9c9ea7" stroke-width="1"/>
<line x1="610.50" y1="613.6" x2="610.50" y2="618.0" stroke="#9c9ea7" stroke-width="1"/>
<line x1="617.50" y1="613.6" x2="617.50" y2="618.0" stroke="#9c9ea7" stroke-width="1"/>
<line x1="625.50" y1="613.6" x2="625.50" y2="618.0" stroke="#9c9ea7" stroke-width="1"/>
<line x1="632.50" y1="613.6" x2="632.50" y2="618.0" stroke="#9c9ea7" stroke-width="1"/>
<line x1="639.50" y1="613.6" x2="639.50" y2="618.0" stroke="#9c9ea7" stroke-width="1"/>
<line x1="647.50" y1="613.6" x2="647.50" y2="618.0" stroke="#9c9ea7" stroke-width="1"/>
<line x1="654.50" y1="613.6" x2="654.50" y2="618.0" stroke="#9c9ea7" stroke-width="1"/>
<line x1="662.50" y1="613.6" x2="662.50" y2="618.0" stroke="#9c9ea7" stroke-width="1"/>
<line x1="669.50" y1="613.6" x2="669.50" y2="618.0" stroke="#9c9ea7" stroke-width="1"/>
<line x1="677.50" y1="613.6" x2="677.50" y2="618.0" stroke="#9c9ea7" stroke-width="1"/>
<line x1="684.50" y1="613.6" x2="684.50" y2="618.0" stroke="#9c9ea7" stroke-width="1"/>
<line x1="692.50" y1="613.6" x2="692.50" y2="618.0" stroke="#9c9ea7" stroke-width="1"/>
<line x1="699.50" y1="613.6" x2="699.50" y2="618.0" stroke="#9c9ea7" stroke-width="1"/>
<line x1="707.50" y1="613.6" x2="707.50" y2="618.0" stroke="#9c9ea7" stroke-width="1"/>
<line x1="714.50" y1="613.6" x2="714.50" y2="618.0" stroke="#9c9ea7" stroke-width="1"/>
<line x1="722.50" y1="613.6" x2="722.50" y2="618.0" stroke="#9c9ea7" stroke-width="1"/>
<text x="76.00" y="617.60" text-anchor="end" font-family="Liberation Sans" font-size="11" letter-spacing="-0.36" fill="#3d3f48">0,00</text>
<text x="76.00" y="535.73" text-anchor="end" font-family="Liberation Sans" font-size="11" letter-spacing="-0.36" fill="#3d3f48">3000000,00</text>
<text x="76.00" y="453.86" text-anchor="end" font-family="Liberation Sans" font-size="11" letter-spacing="-0.36" fill="#3d3f48">6000000,00</text>
<text x="76.00" y="371.99" text-anchor="end" font-family="Liberation Sans" font-size="11" letter-spacing="-0.36" fill="#3d3f48">9000000,00</text>
<text x="76.00" y="290.12" text-anchor="end" font-family="Liberation Sans" font-size="11" letter-spacing="-0.36" fill="#3d3f48">12000000,00</text>
<text x="76.00" y="208.25" text-anchor="end" font-family="Liberation Sans" font-size="11" letter-spacing="-0.36" fill="#3d3f48">15000000,00</text>
<text x="87.23" y="555.68" text-anchor="middle" font-family="Liberation Sans" font-size="11" letter-spacing="-0.36" fill="#3a3a3a" stroke="#ffffff" stroke-width="2.2" paint-order="stroke" stroke-linejoin="round">1924578,00</text>
<text x="94.70" y="597.27" text-anchor="middle" font-family="Liberation Sans" font-size="11" letter-spacing="-0.36" fill="#3a3a3a" stroke="#ffffff" stroke-width="2.2" paint-order="stroke" stroke-linejoin="round">400431,00</text>
<text x="109.63" y="575.70" text-anchor="middle" font-family="Liberation Sans" font-size="11" letter-spacing="-0.36" fill="#3a3a3a" stroke="#ffffff" stroke-width="2.2" paint-order="stroke" stroke-linejoin="round">1190758,00</text>
<text x="117.10" y="498.99" text-anchor="middle" font-family="Liberation Sans" font-size="11" letter-spacing="-0.36" fill="#3a3a3a" stroke="#ffffff" stroke-width="2.2" paint-order="stroke" stroke-linejoin="round">4001678,00</text>
<text x="146.96" y="560.90" text-anchor="middle" font-family="Liberation Sans" font-size="11" letter-spacing="-0.36" fill="#3a3a3a" stroke="#ffffff" stroke-width="2.2" paint-order="stroke" stroke-linejoin="round">1733408,00</text>
<text x="154.43" y="257.31" text-anchor="middle" font-family="Liberation Sans" font-size="11" letter-spacing="-0.36" fill="#3a3a3a" stroke="#ffffff" stroke-width="2.2" paint-order="stroke" stroke-linejoin="round">12857837,00</text>
<text x="161.90" y="546.30" text-anchor="middle" font-family="Liberation Sans" font-size="11" letter-spacing="-0.36" fill="#3a3a3a" stroke="#ffffff" stroke-width="2.2" paint-order="stroke" stroke-linejoin="round">2268179,00</text>
<text x="169.36" y="586.42" text-anchor="middle" font-family="Liberation Sans" font-size="11" letter-spacing="-0.36" fill="#3a3a3a" stroke="#ffffff" stroke-width="2.2" paint-order="stroke" stroke-linejoin="round">798076,00</text>
<text x="176.83" y="521.81" text-anchor="middle" font-family="Liberation Sans" font-size="11" letter-spacing="-0.36" fill="#3a3a3a" stroke="#ffffff" stroke-width="2.2" paint-order="stroke" stroke-linejoin="round">3165474,00</text>
<text x="184.29" y="461.45" text-anchor="middle" font-family="Liberation Sans" font-size="11" letter-spacing="-0.36" fill="#3a3a3a" stroke="#ffffff" stroke-width="2.2" paint-order="stroke" stroke-linejoin="round">5377503,00</text>
<text x="199.23" y="534.57" text-anchor="middle" font-family="Liberation Sans" font-size="11" letter-spacing="-0.36" fill="#3a3a3a" stroke="#ffffff" stroke-width="2.2" paint-order="stroke" stroke-linejoin="round">2698003,00</text>
<text x="229.09" y="502.14" text-anchor="middle" font-family="Liberation Sans" font-size="11" letter-spacing="-0.36" fill="#3a3a3a" stroke="#ffffff" stroke-width="2.2" paint-order="stroke" stroke-linejoin="round">3886395,00</text>
<text x="236.56" y="556.91" text-anchor="middle" font-family="Liberation Sans" font-size="11" letter-spacing="-0.36" fill="#3a3a3a" stroke="#ffffff" stroke-width="2.2" paint-order="stroke" stroke-linejoin="round">1879548,00</text>
<text x="244.03" y="434.71" text-anchor="middle" font-family="Liberation Sans" font-size="11" letter-spacing="-0.36" fill="#3a3a3a" stroke="#ffffff" stroke-width="2.2" paint-order="stroke" stroke-linejoin="round">6357378,00</text>
<text x="251.49" y="587.55" text-anchor="middle" font-family="Liberation Sans" font-size="11" letter-spacing="-0.36" fill="#3a3a3a" stroke="#ffffff" stroke-width="2.2" paint-order="stroke" stroke-linejoin="round">756678,00</text>
<text x="296.29" y="566.47" text-anchor="middle" font-family="Liberation Sans" font-size="11" letter-spacing="-0.36" fill="#3a3a3a" stroke="#ffffff" stroke-width="2.2" paint-order="stroke" stroke-linejoin="round">1529228,00</text>
<text x="318.69" y="581.55" text-anchor="middle" font-family="Liberation Sans" font-size="11" letter-spacing="-0.36" fill="#3a3a3a" stroke="#ffffff" stroke-width="2.2" paint-order="stroke" stroke-linejoin="round">976422,00</text>
<text x="326.15" y="593.78" text-anchor="middle" font-family="Liberation Sans" font-size="11" letter-spacing="-0.36" fill="#3a3a3a" stroke="#ffffff" stroke-width="2.2" paint-order="stroke" stroke-linejoin="round">528338,00</text>
<text x="341.09" y="506.44" text-anchor="middle" font-family="Liberation Sans" font-size="11" letter-spacing="-0.36" fill="#3a3a3a" stroke="#ffffff" stroke-width="2.2" paint-order="stroke" stroke-linejoin="round">3728785,00</text>
<text x="370.95" y="552.54" text-anchor="middle" font-family="Liberation Sans" font-size="11" letter-spacing="-0.36" fill="#3a3a3a" stroke="#ffffff" stroke-width="2.2" paint-order="stroke" stroke-linejoin="round">2039711,00</text>
<text x="378.42" y="593.64" text-anchor="middle" font-family="Liberation Sans" font-size="11" letter-spacing="-0.36" fill="#3a3a3a" stroke="#ffffff" stroke-width="2.2" paint-order="stroke" stroke-linejoin="round">533362,00</text>
<text x="385.88" y="606.67" text-anchor="middle" font-family="Liberation Sans" font-size="11" letter-spacing="-0.36" fill="#3a3a3a" stroke="#ffffff" stroke-width="2.2" paint-order="stroke" stroke-linejoin="round">55993,00</text>
<text x="393.35" y="574.50" text-anchor="middle" font-family="Liberation Sans" font-size="11" letter-spacing="-0.36" fill="#3a3a3a" stroke="#ffffff" stroke-width="2.2" paint-order="stroke" stroke-linejoin="round">1234780,00</text>
<text x="400.82" y="532.33" text-anchor="middle" font-family="Liberation Sans" font-size="11" letter-spacing="-0.36" fill="#3a3a3a" stroke="#ffffff" stroke-width="2.2" paint-order="stroke" stroke-linejoin="round">2780292,00</text>
<text x="430.68" y="547.40" text-anchor="middle" font-family="Liberation Sans" font-size="11" letter-spacing="-0.36" fill="#3a3a3a" stroke="#ffffff" stroke-width="2.2" paint-order="stroke" stroke-linejoin="round">2227825,00</text>
<text x="453.08" y="565.92" text-anchor="middle" font-family="Liberation Sans" font-size="11" letter-spacing="-0.36" fill="#3a3a3a" stroke="#ffffff" stroke-width="2.2" paint-order="stroke" stroke-linejoin="round">1549316,00</text>
<text x="482.95" y="522.39" text-anchor="middle" font-family="Liberation Sans" font-size="11" letter-spacing="-0.36" fill="#3a3a3a" stroke="#ffffff" stroke-width="2.2" paint-order="stroke" stroke-linejoin="round">3144254,00</text>
<text x="490.41" y="594.24" text-anchor="middle" font-family="Liberation Sans" font-size="11" letter-spacing="-0.36" fill="#3a3a3a" stroke="#ffffff" stroke-width="2.2" paint-order="stroke" stroke-linejoin="round">511453,00</text>
<text x="520.28" y="558.32" text-anchor="middle" font-family="Liberation Sans" font-size="11" letter-spacing="-0.36" fill="#3a3a3a" stroke="#ffffff" stroke-width="2.2" paint-order="stroke" stroke-linejoin="round">1827837,00</text>
<text x="542.68" y="530.45" text-anchor="middle" font-family="Liberation Sans" font-size="11" letter-spacing="-0.36" fill="#3a3a3a" stroke="#ffffff" stroke-width="2.2" paint-order="stroke" stroke-linejoin="round">2849169,00</text>
<text x="550.14" y="578.14" text-anchor="middle" font-family="Liberation Sans" font-size="11" letter-spacing="-0.36" fill="#3a3a3a" stroke="#ffffff" stroke-width="2.2" paint-order="stroke" stroke-linejoin="round">1101370,00</text>
<text x="609.87" y="532.69" text-anchor="middle" font-family="Liberation Sans" font-size="11" letter-spacing="-0.36" fill="#3a3a3a" stroke="#ffffff" stroke-width="2.2" paint-order="stroke" stroke-linejoin="round">2767010,00</text>
<text x="617.34" y="571.44" text-anchor="middle" font-family="Liberation Sans" font-size="11" letter-spacing="-0.36" fill="#3a3a3a" stroke="#ffffff" stroke-width="2.2" paint-order="stroke" stroke-linejoin="round">1347042,00</text>
<text x="624.81" y="587.17" text-anchor="middle" font-family="Liberation Sans" font-size="11" letter-spacing="-0.36" fill="#3a3a3a" stroke="#ffffff" stroke-width="2.2" paint-order="stroke" stroke-linejoin="round">770673,00</text>
<text x="662.14" y="603.02" text-anchor="middle" font-family="Liberation Sans" font-size="11" letter-spacing="-0.36" fill="#3a3a3a" stroke="#ffffff" stroke-width="2.2" paint-order="stroke" stroke-linejoin="round">189705,00</text>
<text x="677.07" y="574.03" text-anchor="middle" font-family="Liberation Sans" font-size="11" letter-spacing="-0.36" fill="#3a3a3a" stroke="#ffffff" stroke-width="2.2" paint-order="stroke" stroke-linejoin="round">1252024,00</text>
<text x="684.54" y="543.87" text-anchor="middle" font-family="Liberation Sans" font-size="11" letter-spacing="-0.36" fill="#3a3a3a" stroke="#ffffff" stroke-width="2.2" paint-order="stroke" stroke-linejoin="round">2357134,00</text>
<text x="706.93" y="426.27" text-anchor="middle" font-family="Liberation Sans" font-size="11" letter-spacing="-0.36" fill="#3a3a3a" stroke="#ffffff" stroke-width="2.2" paint-order="stroke" stroke-linejoin="round">6666671,00</text>
<text x="714.40" y="484.81" text-anchor="middle" font-family="Liberation Sans" font-size="11" letter-spacing="-0.36" fill="#3a3a3a" stroke="#ffffff" stroke-width="2.2" paint-order="stroke" stroke-linejoin="round">4521582,00</text>
<text x="721.87" y="593.90" text-anchor="middle" font-family="Liberation Sans" font-size="11" letter-spacing="-0.36" fill="#3a3a3a" stroke="#ffffff" stroke-width="2.2" paint-order="stroke" stroke-linejoin="round">524058,00</text>
<text x="87.23" y="621.60" text-anchor="end" dominant-baseline="central" transform="rotate(-30 87.23 621.60)" font-family="Liberation Sans" font-size="10.5" fill="#3d3f48">Оренбургская область</text>
<text x="117.10" y="621.60" text-anchor="end" dominant-baseline="central" transform="rotate(-30 117.10 621.60)" font-family="Liberation Sans" font-size="10.5" fill="#3d3f48">Республика Башкортостан</text>
<text x="146.96" y="621.60" text-anchor="end" dominant-baseline="central" transform="rotate(-30 146.96 621.60)" font-family="Liberation Sans" font-size="10.5" fill="#3d3f48">Липецкая область</text>
<text x="176.83" y="621.60" text-anchor="end" dominant-baseline="central" transform="rotate(-30 176.83 621.60)" font-family="Liberation Sans" font-size="10.5" fill="#3d3f48">Республика Дагестан</text>
<text x="206.69" y="621.60" text-anchor="end" dominant-baseline="central" transform="rotate(-30 206.69 621.60)" font-family="Liberation Sans" font-size="10.5" fill="#3d3f48">Челябинская область</text>
<text x="236.56" y="621.60" text-anchor="end" dominant-baseline="central" transform="rotate(-30 236.56 621.60)" font-family="Liberation Sans" font-size="10.5" fill="#3d3f48">Омская область</text>
<text x="266.42" y="621.60" text-anchor="end" dominant-baseline="central" transform="rotate(-30 266.42 621.60)" font-family="Liberation Sans" font-size="10.5" fill="#3d3f48">Республика Саха (Якутия)</text>
<text x="296.29" y="621.60" text-anchor="end" dominant-baseline="central" transform="rotate(-30 296.29 621.60)" font-family="Liberation Sans" font-size="10.5" fill="#3d3f48">Тюменская область без автономн...</text>
<text x="326.15" y="621.60" text-anchor="end" dominant-baseline="central" transform="rotate(-30 326.15 621.60)" font-family="Liberation Sans" font-size="10.5" fill="#3d3f48">Республика Хакасия</text>
<text x="356.02" y="621.60" text-anchor="end" dominant-baseline="central" transform="rotate(-30 356.02 621.60)" font-family="Liberation Sans" font-size="10.5" fill="#3d3f48">Муниципальные образования терр...</text>
<text x="385.88" y="621.60" text-anchor="end" dominant-baseline="central" transform="rotate(-30 385.88 621.60)" font-family="Liberation Sans" font-size="10.5" fill="#3d3f48">Чукотский автономный округ</text>
<text x="415.75" y="621.60" text-anchor="end" dominant-baseline="central" transform="rotate(-30 415.75 621.60)" font-family="Liberation Sans" font-size="10.5" fill="#3d3f48">Тульская область</text>
<text x="445.61" y="621.60" text-anchor="end" dominant-baseline="central" transform="rotate(-30 445.61 621.60)" font-family="Liberation Sans" font-size="10.5" fill="#3d3f48">Ярославская область</text>
<text x="475.48" y="621.60" text-anchor="end" dominant-baseline="central" transform="rotate(-30 475.48 621.60)" font-family="Liberation Sans" font-size="10.5" fill="#3d3f48">г. Севастополь</text>
<text x="505.34" y="621.60" text-anchor="end" dominant-baseline="central" transform="rotate(-30 505.34 621.60)" font-family="Liberation Sans" font-size="10.5" fill="#3d3f48">Республика Калмыкия</text>
<text x="535.21" y="621.60" text-anchor="end" dominant-baseline="central" transform="rotate(-30 535.21 621.60)" font-family="Liberation Sans" font-size="10.5" fill="#3d3f48">Кабардино-Балкарская Республик...</text>
<text x="565.08" y="621.60" text-anchor="end" dominant-baseline="central" transform="rotate(-30 565.08 621.60)" font-family="Liberation Sans" font-size="10.5" fill="#3d3f48">Калининградская область</text>
<text x="594.94" y="621.60" text-anchor="end" dominant-baseline="central" transform="rotate(-30 594.94 621.60)" font-family="Liberation Sans" font-size="10.5" fill="#3d3f48">Саратовская область</text>
<text x="624.81" y="621.60" text-anchor="end" dominant-baseline="central" transform="rotate(-30 624.81 621.60)" font-family="Liberation Sans" font-size="10.5" fill="#3d3f48">Республика Мордовия</text>
<text x="654.67" y="621.60" text-anchor="end" dominant-baseline="central" transform="rotate(-30 654.67 621.60)" font-family="Liberation Sans" font-size="10.5" fill="#3d3f48">Мурманская область</text>
<text x="684.54" y="621.60" text-anchor="end" dominant-baseline="central" transform="rotate(-30 684.54 621.60)" font-family="Liberation Sans" font-size="10.5" fill="#3d3f48">Иркутская область</text>
<text x="714.40" y="621.60" text-anchor="end" dominant-baseline="central" transform="rotate(-30 714.40 621.60)" font-family="Liberation Sans" font-size="10.5" fill="#3d3f48">Ростовская область</text>
</g>
<rect x="333.1" y="728.2" width="20.7" height="11.6" rx="3" fill="#00aed8"/>
<text x="358.6" y="738.2" font-family="Liberation Sans" font-size="10.4" fill="#333">Население</text>
<g fill="none" stroke="#6b6b6b" stroke-width="1"><path d="M22.4 179.4 V192.4 H32.4 V182.4 H19.6"/><path d="M53.2 192.4 V182.4 H42.9 M42.9 185.9 V192.4 H53.2 M45.7 179.6 L42.9 182.4 L45.7 185.2"/></g>
</svg>
<div style="position:absolute;left:644px;top:173px;width:87px;height:19.5px;background:#fff;border-radius:3px;box-shadow:0 1px 4px rgba(40,50,80,0.12)"></div>
<svg style="position:absolute;left:0;top:0" width="1488" height="757" viewBox="0 0 1488 757">
<g fill="none" stroke-width="1" stroke-linecap="butt" stroke-linejoin="miter">
<path d="M654.4 188.8 V178.6 M651 182 L654.4 178.6 L657.8 182" stroke="#9d9fa9"/>
<path d="M670.4 178 V188.4 M667 185 L670.4 188.4 L673.8 185" stroke="#3a3c47"/>
<path d="M682 179.6 H692.8" stroke="#6d6f78" stroke-width="1.3"/>
<path d="M687.5 182.1 V187.6 M684.7 184.8 L687.5 187.6 L690.3 184.8" stroke="#3a3c47"/>
<path d="M701.5 179 V188 M699.1 185.6 L701.5 188 L703.9 185.6" stroke="#3a3c47"/>
</g>
<text x="707" y="181.6" text-anchor="middle" font-family="Liberation Sans" font-size="4.8" font-weight="700" fill="#4a4c56">A</text>
<text x="707" y="188.6" text-anchor="middle" font-family="Liberation Sans" font-size="4.8" font-weight="700" fill="#4a4c56">Z</text>
<g fill="#2f313c"><circle cx="720.4" cy="179.4" r="1.15"/><circle cx="720.4" cy="183.5" r="1.15"/><circle cx="720.4" cy="187.5" r="1.15"/></g>
</svg>
<div class="t" style="left:604.60px;top:134.00px;font-size:13.6px;line-height:13.6px;color:#16aad6;font-weight:400;">Настроить виджет</div>
<div style="position:absolute;left:561.3px;top:143.3px;width:252.2px;height:26.5px;background:#1e1f2a;border-radius:4px"></div>
<svg style="position:absolute;left:680px;top:169px" width="16" height="8" viewBox="0 0 16 8"><path d="M1.4 0.5 L7.4 6.4 L13.4 0.5 Z" fill="#1e1f2a"/></svg>
<div class="t" style="left:574.50px;top:151.00px;font-size:11.5px;line-height:11.5px;color:#ffffff;font-weight:400;-webkit-text-stroke:0.25px #ffffff;">Перейти на следующий уровень иерархии</div>
</body></html>
